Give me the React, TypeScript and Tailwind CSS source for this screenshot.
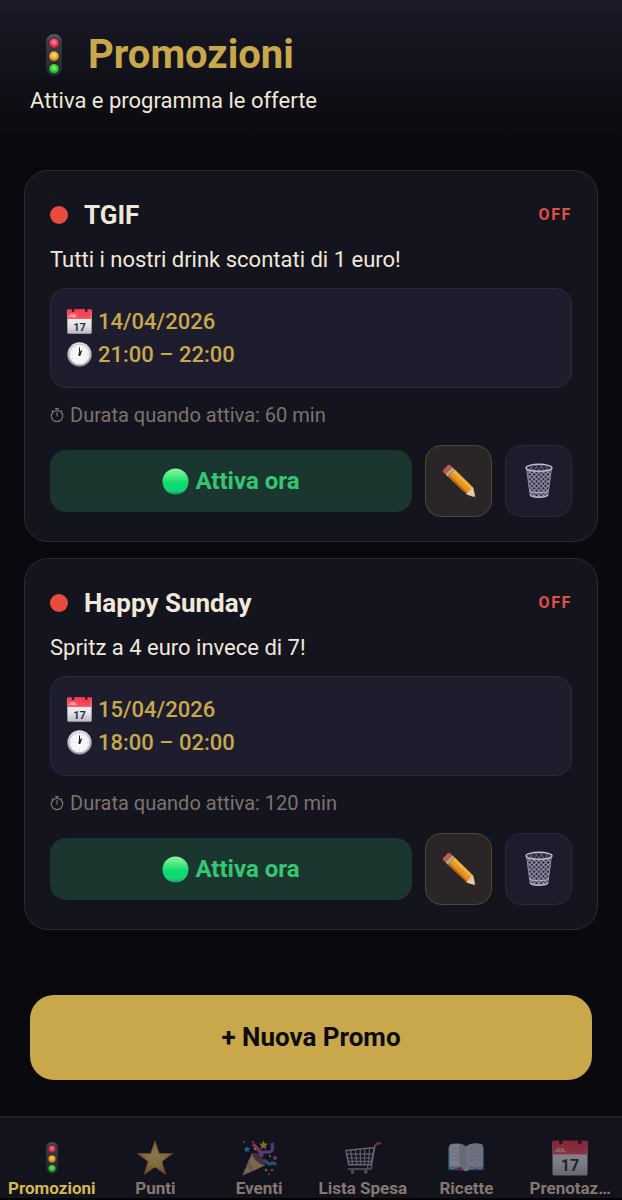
import type { ReactNode } from "react";
import clsx from "clsx";

type Promo = {
  id: number;
  name: string;
  description: string;
  date: string;
  time: string;
  duration: number;
};

const promos: Promo[] = [
  {
    id: 1,
    name: "TGIF",
    description: "Tutti i nostri drink scontati di 1 euro!",
    date: "14/04/2026",
    time: "21:00 – 22:00",
    duration: 60,
  },
  {
    id: 2,
    name: "Happy Sunday",
    description: "Spritz a 4 euro invece di 7!",
    date: "15/04/2026",
    time: "18:00 – 02:00",
    duration: 120,
  },
];

type IconProps = { className?: string };

function TrafficLightIcon({ className }: IconProps) {
  return (
    <svg viewBox="0 0 40 40" className={className} aria-hidden="true">
      <defs>
        <linearGradient id="tl-body" x1="0" y1="0" x2="0" y2="1">
          <stop offset="0" stopColor="#5b5863" />
          <stop offset="0.2" stopColor="#3d3c46" />
          <stop offset="1" stopColor="#25252b" />
        </linearGradient>
        <radialGradient id="tl-red" cx="0.5" cy="0.4" r="0.6">
          <stop offset="0" stopColor="#ff9aa8" />
          <stop offset="0.5" stopColor="#ee4460" />
          <stop offset="1" stopColor="#b41734" />
        </radialGradient>
        <radialGradient id="tl-yellow" cx="0.5" cy="0.4" r="0.6">
          <stop offset="0" stopColor="#ffe49a" />
          <stop offset="0.5" stopColor="#f3b53a" />
          <stop offset="1" stopColor="#b87312" />
        </radialGradient>
        <radialGradient id="tl-green" cx="0.5" cy="0.4" r="0.6">
          <stop offset="0" stopColor="#8df58a" />
          <stop offset="0.5" stopColor="#3fd23f" />
          <stop offset="1" stopColor="#168a1b" />
        </radialGradient>
      </defs>
      <rect x="12.5" y="0" width="15" height="40" rx="7.5" fill="url(#tl-body)" />
      <circle cx="20" cy="8.5" r="5.4" fill="#2a2930" />
      <circle cx="20" cy="21" r="5.4" fill="#2a2930" />
      <circle cx="20" cy="33" r="5.4" fill="#222227" />
      <circle cx="20" cy="8.8" r="4.7" fill="url(#tl-red)" />
      <circle cx="20" cy="21.2" r="4.7" fill="url(#tl-yellow)" />
      <circle cx="20" cy="33.2" r="4.7" fill="url(#tl-green)" />
    </svg>
  );
}

function CalendarIcon({ className }: IconProps) {
  return (
    <svg viewBox="0 0 36 36" className={className} aria-hidden="true">
      <defs>
        <linearGradient id="cal-page" x1="0" y1="0" x2="0" y2="1">
          <stop offset="0" stopColor="#ffffff" />
          <stop offset="0.65" stopColor="#e4e4ea" />
          <stop offset="1" stopColor="#b9b9c4" />
        </linearGradient>
        <linearGradient id="cal-top" x1="0" y1="0" x2="0" y2="1">
          <stop offset="0" stopColor="#f5364f" />
          <stop offset="1" stopColor="#ff5f68" />
        </linearGradient>
      </defs>
      <rect x="0.5" y="1" width="35" height="34.5" rx="1.5" fill="url(#cal-page)" />
      <path d="M2 .5h32a1.500 1.500 0 0 1 1.500 1.500v12.500H.5V2A1.500 1.500 0 0 1 2 .5z" fill="url(#cal-top)" />
      <path d="M7 0h3.500v2.500a1.750 1.750 0 0 1-3.500 0zM26 0h3.500v2.500a1.750 1.750 0 0 1-3.500 0z" fill="#3b1620" />
      <path d="M18 5v8M21 5v8M24 5v8M27 5v8M30 5v8" stroke="#d92f45" strokeWidth="1" opacity="0.6" />
      <text x="3" y="12" fontSize="6" fontWeight="700" fill="#ffe3e6" fontFamily="Roboto, sans-serif">
        JUL
      </text>
      <text x="18" y="31" fontSize="16" fontWeight="700" textAnchor="middle" fill="#33333b" fontFamily="Roboto, sans-serif">
        17
      </text>
    </svg>
  );
}

function ClockIcon({ className }: IconProps) {
  return (
    <svg viewBox="0 0 36 36" className={className} aria-hidden="true">
      <defs>
        <linearGradient id="clock-rim" x1="0" y1="0" x2="0" y2="1">
          <stop offset="0" stopColor="#e6e6ea" />
          <stop offset="1" stopColor="#8d8e99" />
        </linearGradient>
      </defs>
      <circle cx="18" cy="18" r="17.5" fill="url(#clock-rim)" />
      <circle cx="18" cy="18" r="14.8" fill="#f7f7f8" stroke="#b4b4bc" strokeWidth="1" />
      <path
        d="M18 5v2.5M18 28.500V31M5 18h2.500M28.500 18H31M11.500 6.700l1 1.800M24.500 6.700l-1 1.800M6.700 11.500l1.800 1M29.300 11.500l-1.800 1M6.700 24.500l1.800-1M29.300 24.500l-1.800-1M11.500 29.300l1-1.800M24.500 29.300l-1-1.800"
        stroke="#c9c9cf"
        strokeWidth="1"
      />
      <path d="M18 20V8" stroke="#25252b" strokeWidth="1.5" />
      <path d="M17.500 19.500l3.500-7" stroke="#25252b" strokeWidth="2.2" />
      <circle cx="18" cy="18" r="1.8" fill="#25252b" />
    </svg>
  );
}

function StopwatchIcon({ className }: IconProps) {
  return (
    <svg viewBox="0 0 14 16" className={className} fill="none" stroke="currentColor" aria-hidden="true">
      <circle cx="7" cy="9" r="5.7" strokeWidth="1.2" />
      <path d="M7 5v4.500" strokeWidth="1.2" />
      <path d="M5 1.500h4M7 1.500v2M2 3.500l1.500 1.500M12 3.500L10.500 5" strokeWidth="1.2" />
    </svg>
  );
}

function GreenCircleIcon({ className }: IconProps) {
  return (
    <svg viewBox="0 0 28 28" className={className} aria-hidden="true">
      <defs>
        <linearGradient id="green-ball" x1="0" y1="0" x2="0" y2="1">
          <stop offset="0" stopColor="#8df5a0" />
          <stop offset="0.4" stopColor="#35e57c" />
          <stop offset="0.55" stopColor="#0bdc6c" />
          <stop offset="0.85" stopColor="#14d576" />
          <stop offset="1" stopColor="#0c9a72" />
        </linearGradient>
      </defs>
      <circle cx="14" cy="14" r="13.5" fill="url(#green-ball)" />
    </svg>
  );
}

function PencilIcon({ className }: IconProps) {
  return (
    <svg viewBox="0 0 34 34" className={className} aria-hidden="true">
      <path d="M1.200 6L5.500 1.500Q7 .2 8.500 1.500L10.200 3.200 3.500 10.200 1.500 8.500Q.2 7.200 1.200 6z" fill="#c4574a" />
      <path d="M3.500 10.200L10.200 3.200l2.600 2.400-7 7.200z" fill="#b7a58e" />
      <path d="M5.800 12.800l2-2.200L27 29.500l-2.200 1z" fill="#b9691a" />
      <path d="M7.500 11l3.100-3.200L29.500 26 26.500 29.500z" fill="#e6951f" />
      <path d="M10.200 8.200l2.600-2.600L31.200 23.500l-2 2.800z" fill="#f2b03c" />
      <path d="M24.500 30.400Q25.500 27.500 27.800 26.800 28.500 24 31.200 23.400L33.500 33.500z" fill="#e8c9a6" />
      <path d="M31.600 33l1.500-1.600.4 2.100z" fill="#4a3b33" />
    </svg>
  );
}

function TrashIcon({ className }: IconProps) {
  return (
    <svg viewBox="0 0 28 36" className={className} fill="none" aria-hidden="true">
      <defs>
        {/* wire mesh */}
        <pattern id="trash-mesh" width="4.6" height="4.6" patternUnits="userSpaceOnUse">
          <path d="M0 0l4.600 4.600M4.600 0L0 4.600" stroke="#9f9db6" strokeWidth="1.1" />
        </pattern>
      </defs>
      <path d="M1.500 5l3.500 26c1 4 17 4 18 0L26.500 5z" fill="#232235" />
      <path d="M1.500 5l3.500 26c1 4 17 4 18 0L26.500 5z" fill="url(#trash-mesh)" stroke="#8f8da8" strokeWidth="1" />
      <ellipse cx="14" cy="4.8" rx="13" ry="3.5" fill="#2a293b" stroke="#c0bfce" strokeWidth="1.4" />
      <path d="M5 3.500l3 3.500M10 2l4 5M15 2l4 5M20 2l3 3.500M23 3.500L20 7M18 2l-4 5M13 2L9 7M8 2.500L5 6" stroke="#77758e" strokeWidth="0.8" />
      <path d="M4.500 27.500c2 3 17 3 19 0" stroke="#b0aec4" strokeWidth="1.2" />
      <path d="M5 31.500c1.500 3.800 16.500 3.800 18 0" stroke="#b8b6ca" strokeWidth="1.5" />
    </svg>
  );
}

function StarIcon({ className }: IconProps) {
  return (
    <svg viewBox="0 0 36 36" className={className} aria-hidden="true">
      <defs>
        <radialGradient id="star-fill" cx="0.5" cy="0.45" r="0.6">
          <stop offset="0" stopColor="#f7e08a" />
          <stop offset="0.5" stopColor="#f0bd55" />
          <stop offset="1" stopColor="#d07d2a" />
        </radialGradient>
      </defs>
      <path
        d="M18 .8l4.300 12.600 13.200.1-10.600 8 3.900 13L18 27 7.200 34.500l3.900-13L.5 13.500l13.200-.1z"
        fill="url(#star-fill)"
        stroke="#c98a35"
        strokeWidth="0.6"
      />
    </svg>
  );
}

function PartyIcon({ className }: IconProps) {
  return (
    <svg viewBox="0 0 36 36" className={className} fill="none" aria-hidden="true">
      <path d="M18 16c4-3-1-7-6-12" stroke="#e0559a" strokeWidth="3.5" />
      <path d="M21 17c-1-8 4-4 8-5 3-1 3-5 2-9" stroke="#8464dc" strokeWidth="3.3" />
      <path d="M21 23c4-6 5 2 8 1s4-2 6 1" stroke="#2f93cf" strokeWidth="3.3" />
      <path d="M11 13L1.500 35.500 24 25.500C23 19 18 13 11 13z" fill="#dfb982" />
      <path d="M8 20l6 10-5 2-3.500-6zM4 29l2 4.500-4.500 2z" fill="#c99c74" />
      <path d="M11 13c7-1 13 6 13 12.500-5-1-12-6-13-12.500z" fill="#7c4a61" />
      <path d="M22.500.5l1.200 3 3.300.3-2.500 2.200.8 3.200-2.800-1.700-2.800 1.700.8-3.200L18 3.800l3.300-.3z" fill="#f3c83e" />
      <path d="M6 6l1 2 2.300.3-1.700 1.600.4 2.300-2-1.100-2 1.100.4-2.300-1.700-1.600L5 8z" fill="#31b3dc" />
      <circle cx="34" cy="18" r="2" fill="#d258b6" />
      <circle cx="29" cy="16" r="1.2" fill="#ee8a36" />
      <circle cx="12" cy="2" r="1.2" fill="#e64859" />
      <circle cx="3" cy="2" r="1" fill="#3bb86f" />
      <circle cx="31" cy="30" r="1.5" fill="#e64859" />
      <circle cx="25" cy="30" r="1.3" fill="#f0ad35" />
      <circle cx="28" cy="34" r="1.1" fill="#e64859" />
      <circle cx="14" cy="9" r="1.2" fill="#f1cc48" />
    </svg>
  );
}

function CartIcon({ className }: IconProps) {
  return (
    <svg viewBox="0 0 38 36" className={className} fill="none" aria-hidden="true">
      <path d="M1 10l30-3-3 18H4z" stroke="#b6b5c8" strokeWidth="1.6" />
      <path
        d="M6 9.500L8 25M11 9l1.500 16M16 8.500l.5 16.500M21 8l-.5 17M26 7.500L24.500 25M1.500 14h28.300M2.200 18h27M3 21.500h25.500"
        stroke="#a5a4ba"
        strokeWidth="1.3"
      />
      <path d="M27.500 25l4-20 2-1.500" stroke="#b6b5c8" strokeWidth="1.6" />
      <path d="M32.500 4l1.500-1.200L37 2.500" stroke="#d84c5b" strokeWidth="2.4" strokeLinecap="round" />
      <path d="M24 25v4M28 25v4M3 29.500h25" stroke="#9b9ab0" strokeWidth="1.6" />
      <circle cx="8" cy="32.500" r="2" fill="#a6767e" />
      <circle cx="22" cy="32.500" r="2" fill="#a6767e" />
    </svg>
  );
}

function BookIcon({ className }: IconProps) {
  return (
    <svg viewBox="0 0 38 36" className={className} aria-hidden="true">
      <path d="M0 6h38v25H22l-3 1.500L16 31H0z" fill="#3b7fb4" />
      <path d="M1.500 4C8 1.500 15 2.500 19 6c4-3.500 11-4.500 17.500-2v24C30 26 23 27 19 30.500 15 27 8 26 1.500 28z" fill="#e2e5ec" />
      <path d="M19 6c4-3.500 11-4.500 17.500-2v24C30 26 23 27 19 30.500z" fill="#cbd1dc" />
      <path d="M19 6c-2-2-4-3-7-3.400v24c3 .5 5 1.900 7 3.900z" fill="#b9c0cd" />
      <path d="M3 29c6-1.500 11-.5 16 2 5-2.500 10-3.500 16-2" stroke="#f3f3f5" strokeWidth="1.2" fill="none" />
      <path d="M4 8h7M4 12h7M4 16h7M4 20h7M23 9l11-2M23 13l11-2M23 17l11-2M23 21l11-2" stroke="#b3bac8" strokeWidth="0.7" />
      <path d="M10 28h5v4l-2.500-1.500L10 32z" fill="#d6255b" />
    </svg>
  );
}

const navItems: { label: string; icon: ReactNode }[] = [
  { label: "Promozioni", icon: <TrafficLightIcon className="size-8" /> },
  { label: "Punti", icon: <StarIcon className="size-9" /> },
  { label: "Eventi", icon: <PartyIcon className="size-9" /> },
  { label: "Lista Spesa", icon: <CartIcon className="size-9" /> },
  { label: "Ricette", icon: <BookIcon className="size-9" /> },
  { label: "Prenotaz…", icon: <CalendarIcon className="size-9" /> },
];

function PromoCard({ promo }: { promo: Promo }) {
  return (
    <article className="rounded-3xl border border-[#292935] bg-[#14141f] px-[25px] pt-[25px] pb-6">
      <div className="flex items-center justify-between">
        <div className="flex items-center gap-4">
          <span className="size-[18px] rounded-full bg-[#e74c3c]" />
          <h2 className="text-[26px] leading-[38px] font-bold text-[#f0e8d8]">{promo.name}</h2>
        </div>
        <span className="text-base font-bold tracking-widest text-[#df5045]">OFF</span>
      </div>

      <p className="mt-[10px] text-[22px] leading-8 text-[#f0e8d8]">{promo.description}</p>

      <div className="mt-3 rounded-2xl border border-[#2a2a39] bg-[#1e1d2d] p-4 text-[22px] leading-[33px] font-medium text-[#c8a84b]">
        <div className="flex items-center gap-[6px]">
          <CalendarIcon className="size-[25px]" />
          {promo.date}
        </div>
        <div className="flex items-center gap-[6px]">
          <ClockIcon className="size-[25px]" />
          {promo.time}
        </div>
      </div>

      <div className="mt-3 flex items-center gap-[6px] text-xl leading-[30px] text-[#7d726c]">
        <StopwatchIcon className="h-4 w-[14px]" />
        Durata quando attiva: {promo.duration} min
      </div>

      <div className="mt-[15px] flex items-center gap-[13px]">
        <button
          type="button"
          className="flex h-[62px] flex-1 items-center justify-center gap-[6px] rounded-2xl bg-[#1b362f] text-2xl font-bold text-[#34c772]"
        >
          <GreenCircleIcon className="size-[27px]" />
          Attiva ora
        </button>
        <button
          type="button"
          aria-label="Modifica"
          className="flex h-[72px] w-[67px] items-center justify-center rounded-2xl border border-[#50462f] bg-[#2a2627]"
        >
          <PencilIcon className="size-[34px]" />
        </button>
        <button
          type="button"
          aria-label="Elimina"
          className="flex h-[72px] w-[67px] items-center justify-center rounded-2xl border border-[#29283a] bg-[#1d1c2d]"
        >
          <TrashIcon className="h-9 w-7" />
        </button>
      </div>
    </article>
  );
}

export default function App() {
  return (
    <div className="flex min-h-screen flex-col bg-[#0a0a0e] font-['Roboto',sans-serif]">
      {/* Header */}
      <header className="bg-linear-to-b from-[#1a1a28] to-[#0a0a0e] px-[30px] pt-[29px] pb-6">
        <h1 className="flex items-center gap-[10px] text-[40px] leading-[52px] font-bold text-[#c8a84b]">
          <TrafficLightIcon className="h-[42px] w-12" />
          Promozioni
        </h1>
        <p className="mt-1 text-[22px] leading-8 text-[#f0e8d8]">Attiva e programma le offerte</p>
      </header>

      {/* Promo list */}
      <main className="flex flex-col gap-4 px-6 pt-[29px]">
        {promos.map((promo) => (
          <PromoCard key={promo.id} promo={promo} />
        ))}
      </main>

      <div className="px-[30px] pt-[65px] pb-9">
        <button type="button" className="h-[85px] w-full rounded-3xl bg-[#c8a84b] text-[26px] font-bold text-[#0d0b0c]">
          + Nuova Promo
        </button>
      </div>

      {/* Bottom navigation */}
      <nav className="mt-auto grid grid-cols-6 border-t-2 border-b-2 border-t-[#22222e] border-b-black bg-[#13131e] pt-[22px]">
        {navItems.map((item, i) => (
          <a
            key={item.label}
            href="#"
            aria-current={i === 0 ? "page" : undefined}
            className="flex flex-col items-center"
          >
            <span className={clsx("flex h-9 items-center", i === 0 ? "opacity-90" : "opacity-50")}>{item.icon}</span>
            <span
              className={clsx(
                "mt-[2px] text-[17px] leading-5 font-bold whitespace-nowrap",
                i === 0 ? "text-[#d5b855]" : "text-[#85786f]"
              )}
            >
              {item.label}
            </span>
          </a>
        ))}
      </nav>
    </div>
  );
}
